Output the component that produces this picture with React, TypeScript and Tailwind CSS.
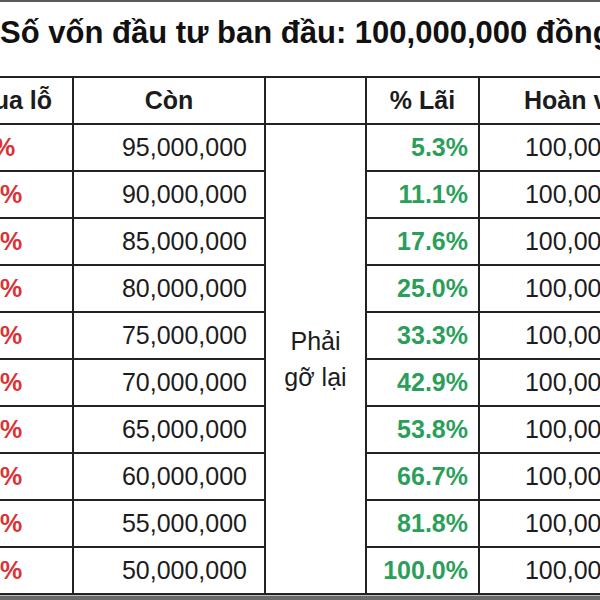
import React from 'react';

const rows = [
    { loss: '-5%', left: '95,000,000', gain: '5.3%' },
    { loss: '-10%', left: '90,000,000', gain: '11.1%' },
    { loss: '-15%', left: '85,000,000', gain: '17.6%' },
    { loss: '-20%', left: '80,000,000', gain: '25.0%' },
    { loss: '-25%', left: '75,000,000', gain: '33.3%' },
    { loss: '-30%', left: '70,000,000', gain: '42.9%' },
    { loss: '-35%', left: '65,000,000', gain: '53.8%' },
    { loss: '-40%', left: '60,000,000', gain: '66.7%' },
    { loss: '-45%', left: '55,000,000', gain: '81.8%' },
    { loss: '-50%', left: '50,000,000', gain: '100.0%' },
];

const cell = 'border-2 border-[#222] p-0';

export default function App() {
    return (
        <div
            className="w-[600px] h-[600px] overflow-hidden bg-white flex flex-col text-[#1c1c1c]"
            style={{ fontFamily: '"Liberation Sans", Arial, sans-serif' }}
        >
            <div className="h-[2px] bg-[#5a5a5a] shrink-0" />
            <h1 className="mt-[15px] text-[31px] leading-[31px] font-bold whitespace-nowrap text-[#111]">
                Số vốn đầu tư ban đầu: 100,000,000 đồng
            </h1>
            <table className="mt-[28px] ml-[-88px] table-fixed border-collapse text-[25px] shrink-0 w-[770px]">
                <colgroup>
                    <col className="w-[160px]" />
                    <col className="w-[192px]" />
                    <col className="w-[101px]" />
                    <col className="w-[113px]" />
                    <col className="w-[204px]" />
                </colgroup>
                <thead>
                    <tr className="h-[47px] font-bold">
                        <th className={cell}>% Thua lỗ</th>
                        <th className={cell}>Còn</th>
                        <th className={cell}></th>
                        <th className={cell}>% Lãi</th>
                        <th className={cell}>Hoàn vốn</th>
                    </tr>
                </thead>
                <tbody>
                    {rows.map((r, i) => (
                        <tr key={r.left} className="h-[47px]">
                            <td className={`${cell} text-center font-bold text-[#db3236]`}>{r.loss}</td>
                            <td className={`${cell} text-right pr-[17px]`}>{r.left}</td>
                            {i === 0 && (
                                <td rowSpan={rows.length} className={`${cell} text-center leading-[36px]`}>
                                    Phải
                                    <br />
                                    gỡ lại
                                </td>
                            )}
                            <td className={`${cell} text-right pr-[10px] font-bold text-[#2b9f5a]`}>{r.gain}</td>
                            <td className={`${cell} text-right pr-[18px]`}>100,000,000</td>
                        </tr>
                    ))}
                </tbody>
            </table>
            <div className="flex-1 border-t border-[#bbb] bg-[#6a6a6a]" />
        </div>
    );
}
